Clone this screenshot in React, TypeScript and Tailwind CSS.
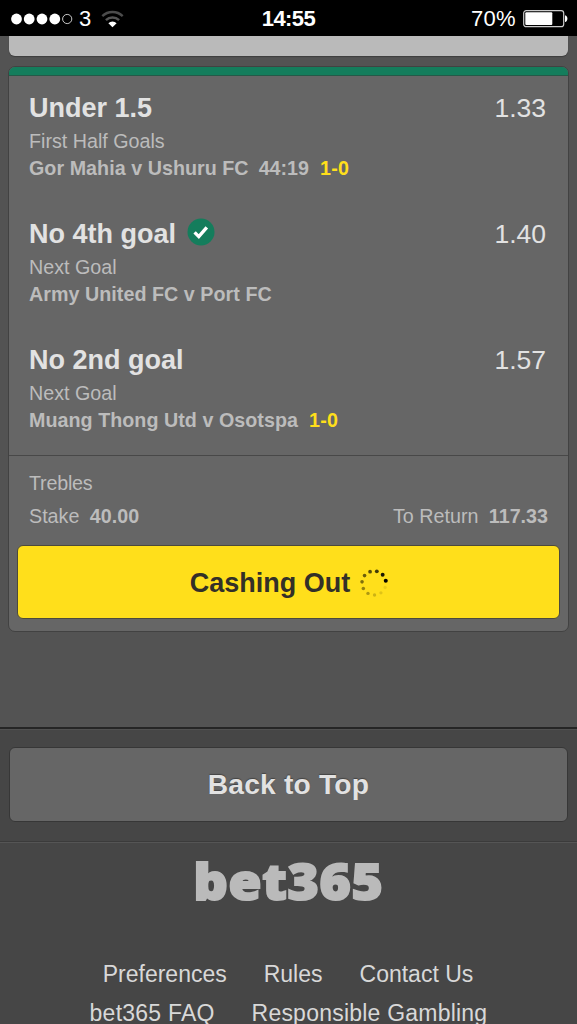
import type { ReactNode } from "react";

type Selection = {
  name: string;
  market: string;
  fixture: string;
  odds: string;
  clock?: string;
  score?: string;
  won?: boolean;
};

const selections: Selection[] = [
  {
    name: "Under 1.5",
    market: "First Half Goals",
    fixture: "Gor Mahia v Ushuru FC",
    odds: "1.33",
    clock: "44:19",
    score: "1-0",
  },
  {
    name: "No 4th goal",
    market: "Next Goal",
    fixture: "Army United FC v Port FC",
    odds: "1.40",
    won: true,
  },
  {
    name: "No 2nd goal",
    market: "Next Goal",
    fixture: "Muang Thong Utd v Osotspa",
    odds: "1.57",
    score: "1-0",
  },
];

function StatusBar() {
  return (
    <header className="grid h-9 shrink-0 grid-cols-3 items-center bg-black pt-0.5 text-white">
      <div className="flex items-center pl-[11px]">
        <svg width="62" height="14" viewBox="0 0 62 14">
          {[5.5, 18.2, 31, 43.8].map((cx) => (
            <circle key={cx} cx={cx} cy="7" r="5.4" fill="#fff" />
          ))}
          <circle cx="56.2" cy="7" r="4.6" fill="none" stroke="#ddd" strokeWidth="0.9" />
        </svg>
        <span className="ml-1.5 text-[22px] leading-none">3</span>
        <svg className="ml-[10px]" width="23" height="18" viewBox="0 0 23 18" fill="none">
          <path d="M1.3 6.2a14.6 14.6 0 0 1 20.4 0" stroke="#4c4c4c" strokeWidth="2.4" />
          <path d="M4.9 10.2a9.4 9.4 0 0 1 13.2 0" stroke="#555" strokeWidth="2.4" />
          <path d="M11.5 17.2 7.4 13.2a5.8 5.8 0 0 1 8.2 0Z" fill="#fff" />
        </svg>
      </div>
      <div className="text-center text-[22px] leading-none font-bold tracking-[-0.6px]">14:55</div>
      <div className="flex items-center justify-end pr-[9px]">
        <span className="mr-[7px] text-[22px] leading-none tracking-[0.3px]">70%</span>
        <svg width="45" height="18" viewBox="0 0 45 18">
          <rect x="0.7" y="0.7" width="40" height="16" rx="2.5" fill="none" stroke="#ccc" strokeWidth="1.2" />
          <rect x="2.3" y="2.3" width="27" height="12.8" rx="1" fill="#fff" />
          <path d="M42 5.3c3.2.8 3.2 6 0 6.8Z" fill="#fff" />
        </svg>
      </div>
    </header>
  );
}

function WonIcon() {
  return (
    <svg className="ml-[11px] -mt-1" width="28" height="28" viewBox="0 0 28 28">
      <circle cx="14" cy="14" r="13.5" fill="#147d5c" />
      <path d="m7.6 14.4 4.2 4.2 8-9.2" fill="none" stroke="#fff" strokeWidth="3.4" />
    </svg>
  );
}

function SelectionRow({ selection }: { selection: Selection }) {
  const { name, market, fixture, odds, clock, score, won } = selection;

  return (
    <div className="text-[19.7px] leading-[27px] text-[#bcbcbc]">
      <div className="mb-0.5 flex h-[37px] items-center justify-between text-[27px] leading-9 text-[#e2e2e2]">
        <div className="flex items-center">
          <span className="font-bold">{name}</span>
          {won && <WonIcon />}
        </div>
        <span className="text-[26.5px]">{odds}</span>
      </div>
      <div>{market}</div>
      <div className="flex font-bold">
        <span className="tracking-[0.04px]">{fixture}</span>
        {clock && <span className="ml-[10px]">{clock}</span>}
        {score && <span className="ml-[11px] tracking-[0.3px] text-[#ffdf1b]">{score}</span>}
      </div>
    </div>
  );
}

const spinnerDots = [0.08, 0.12, 0.2, 0.32, 0.42, 0.5, 0.58, 0.66, 0.74, 0.9, 1];

function Spinner() {
  return (
    <svg className="-mt-0.5 ml-[9px]" width="30" height="30" viewBox="0 0 30 30">
      {spinnerDots.map((opacity, i) => {
        const angle = ((22 + i * 32.7) * Math.PI) / 180;
        return (
          <circle
            key={i}
            cx={15 + 12 * Math.cos(angle)}
            cy={15 + 12 * Math.sin(angle)}
            r={1.6 + opacity * 0.4}
            fill="#000"
            opacity={opacity}
          />
        );
      })}
    </svg>
  );
}

function FooterLink({ children }: { children: ReactNode }) {
  return (
    <a href="#" className="whitespace-nowrap">
      {children}
    </a>
  );
}

export default function App() {
  return (
    <div className="flex h-[1024px] w-[577px] flex-col overflow-hidden bg-[#535353] font-['Liberation_Sans',Arial,sans-serif]">
      <StatusBar />

      <main className="h-[691px] shrink-0 px-2">
        {/* Tail of the previous bet card */}
        <div className="mx-px h-5 rounded-b-md bg-[#bababa] shadow-[0_1px_1px_#3d3d3d]" />

        <section className="mt-[10px] h-[566px] overflow-hidden rounded-[7px] border border-[#424242] bg-[#666]">
          <div className="h-[9px] border-b border-[#245a48] bg-[#147d5c]" />
          <div className="flex h-[380px] flex-col gap-[33px] border-b border-[#484848] pt-[13px] pr-[22px] pl-5">
            {selections.map((selection) => (
              <SelectionRow key={selection.name} selection={selection} />
            ))}
          </div>
          <div className="px-5 pt-[13px] text-[19.7px] leading-7 text-[#bcbcbc]">
            <div className="tracking-[-0.2px]">Trebles</div>
            <div className="mt-[5px] flex justify-between">
              <div>
                Stake <b className="ml-[5px]">40.00</b>
              </div>
              <div>
                To Return <b className="ml-[5px]">117.33</b>
              </div>
            </div>
          </div>
          <button className="mx-2 mt-[15px] flex h-[74px] w-[543px] items-center justify-center rounded-md border border-[#4c4a3c] bg-[#ffdf1b] pt-[3px] pl-0.5 text-[27px] font-bold text-[#333028]">
            Cashing Out
            <Spinner />
          </button>
        </section>
      </main>

      <div className="h-[115px] shrink-0 border-t-2 border-[#252525] bg-[#464646] px-[9px] pt-[18px] shadow-[inset_0_1px_0_#515151]">
        <button className="h-[75px] w-full rounded-md border border-[#373737] bg-[#666] text-[28.2px] font-bold tracking-[0.2px] text-[#e2e2e2] [text-shadow:0_-1px_1px_#444]">
          Back to Top
        </button>
      </div>

      <footer className="flex-1 border-t border-[#555] bg-[#464646] text-[23px] leading-[39px] text-[#d8d8d8] shadow-[0_-1px_0_#3b3b3b]">
        <div className="mt-[8px] h-[60px] scale-x-[1.09] text-center font-['Open_Sans',sans-serif] text-[49px] leading-[60px] font-extrabold tracking-[0.6px] text-[#bababa] [-webkit-text-stroke:2px_#bababa]">
          bet365
        </div>
        <nav className="mt-[44px]">
          <div className="flex justify-center gap-[37px] pr-px">
            <FooterLink>Preferences</FooterLink>
            <FooterLink>Rules</FooterLink>
            <FooterLink>Contact Us</FooterLink>
          </div>
          <div className="flex justify-center gap-[37px] tracking-[0.22px]">
            <FooterLink>bet365 FAQ</FooterLink>
            <FooterLink>Responsible Gambling</FooterLink>
          </div>
        </nav>
      </footer>
    </div>
  );
}
